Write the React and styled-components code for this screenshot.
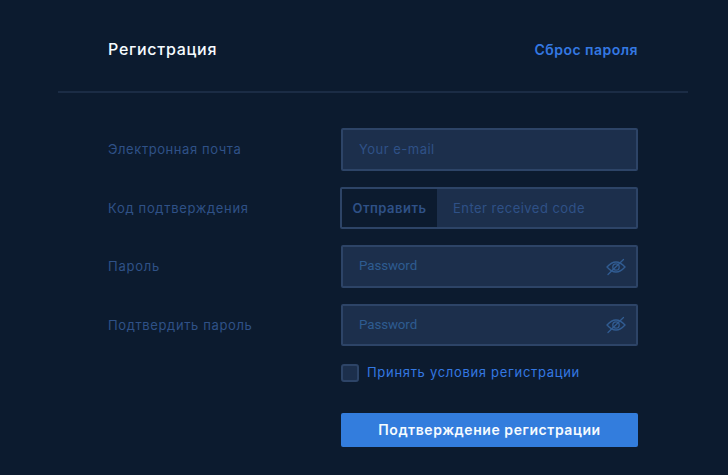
import React from "react";
import styled, { createGlobalStyle } from "styled-components";

const GlobalStyle = createGlobalStyle`
  *, *::before, *::after { box-sizing: border-box; }
  body { margin: 0; background: #0c1b2f; overflow: hidden; }
  button, input { font: inherit; }
`;

const Page = styled.main`
  width: 728px;
  height: 475px;
  padding: 0 40px 0 58px;
  background: #0c1b2f;
  font-family: Inter, "Noto Sans", sans-serif;
  font-size: 13px;
`;

const Header = styled.header`
  display: flex;
  justify-content: space-between;
  height: 93px;
  padding: 0 50px;
  border-bottom: 2px solid #1b2c45;
  white-space: nowrap;
`;

const Title = styled.h1`
  margin: 39px 0 0;
  color: #f6fbff;
  font-size: 16px;
  font-weight: 500;
  line-height: 20px;
  letter-spacing: 0.72px;
`;

const ResetLink = styled.a`
  margin-top: 40px;
  color: #3478e2;
  font-size: 14px;
  font-weight: 600;
  line-height: 20px;
  letter-spacing: 0.48px;
`;

const Form = styled.form`
  display: flex;
  flex-direction: column;
  padding: 35px 50px 0;
`;

const Row = styled.div`
  display: grid;
  grid-template-columns: 233px 297px;
  height: ${({ $height }) => $height}px;
  margin-bottom: ${({ $gap }) => $gap}px;
`;

const Label = styled.label`
  padding-top: 12px;
  color: #2f5187;
  line-height: 18px;
  letter-spacing: ${({ $spacing }) => $spacing}px;
  white-space: nowrap;
`;

const Field = styled.div`
  display: flex;
  align-items: center;
  height: 100%;
  margin-left: ${({ $wide }) => ($wide ? "-1px" : "0")};
  padding-right: ${({ $icon }) => ($icon ? "10px" : "0")};
  border: 2px solid #2d4467;
  border-radius: 2px;
  background: #1c2f4c;
`;

const Input = styled.input`
  flex: 1;
  min-width: 0;
  height: 100%;
  padding: 0 16px 1px;
  border: 0;
  outline: 0;
  background: transparent;
  color: #7c9bd0;
  letter-spacing: ${({ $spacing }) => $spacing}px;
  &::placeholder { color: #2f5187; opacity: 1; }
`;

const PasswordInput = styled(Input)`
  padding-bottom: 2px;
  font-family: Roboto, sans-serif;
  font-size: 13.3333px;
  &::placeholder { color: #2e5c91; }
`;

const SendButton = styled.button`
  width: 95px;
  height: 100%;
  padding: 0;
  border: 0;
  background: #0c1b2f;
  color: #2f5187;
  font-weight: 600;
  letter-spacing: 0.5px;
`;

const EyeIcon = styled.svg`
  flex: none;
  width: 20px;
  height: 18px;
  fill: none;
  stroke: #315c92;
  stroke-width: 1.3;
  stroke-linecap: round;
`;

const Terms = styled.label`
  display: flex;
  align-items: center;
  gap: 8px;
  height: 18px;
  margin: 18px 0 0 233px;
  color: #3478e2;
  letter-spacing: 0.69px;
  white-space: nowrap;
`;

const TermsText = styled.span`
  padding-bottom: 2px;
  line-height: 16px;
`;

const Checkbox = styled.input`
  appearance: none;
  width: 18px;
  height: 18px;
  margin: 0;
  border: 2px solid #2d4467;
  border-radius: 3px;
  background: #1c2f4c;
`;

const Submit = styled.button`
  width: 297px;
  height: 34px;
  margin: 31px 0 0 233px;
  padding: 0 0 1px;
  border: 0;
  border-radius: 2px;
  background: #337ddd;
  color: #f6fbff;
  font-size: 14px;
  font-weight: 600;
  letter-spacing: 0.56px;
  white-space: nowrap;
`;

function HiddenEye() {
  return (
    <EyeIcon viewBox="0 0 20 18" aria-hidden="true">
      <path d="M1 9Q10 -1 19 9Q10 19 1 9Z" />
      <circle cx="10" cy="9" r="3.2" />
      <path d="M2 16.5L17.5 1.5" />
    </EyeIcon>
  );
}

export default function App() {
  return (
    <>
      <GlobalStyle />
      <Page>
        <Header>
          <Title>Регистрация</Title>
          <ResetLink>Сброс пароля</ResetLink>
        </Header>
        <Form>
          <Row $height={43} $gap={16}>
            <Label htmlFor="email" $spacing={0.57}>Электронная почта</Label>
            <Field>
              <Input id="email" placeholder="Your e-mail" $spacing={0.48} />
            </Field>
          </Row>
          <Row $height={42} $gap={16}>
            <Label htmlFor="code" $spacing={0.68}>Код подтверждения</Label>
            <Field $wide>
              <SendButton type="button">Отправить</SendButton>
              <Input id="code" placeholder="Enter received code" $spacing={0.47} />
            </Field>
          </Row>
          <Row $height={43} $gap={16}>
            <Label htmlFor="password" $spacing={0.75}>Пароль</Label>
            <Field $icon>
              <PasswordInput id="password" type="password" placeholder="Password" $spacing={-0.1} />
              <HiddenEye />
            </Field>
          </Row>
          <Row $height={42} $gap={0}>
            <Label htmlFor="confirm" $spacing={0.62}>Подтвердить пароль</Label>
            <Field $icon>
              <PasswordInput id="confirm" type="password" placeholder="Password" $spacing={-0.1} />
              <HiddenEye />
            </Field>
          </Row>
          <Terms>
            <Checkbox type="checkbox" />
            <TermsText>Принять условия регистрации</TermsText>
          </Terms>
          <Submit type="button">Подтверждение регистрации</Submit>
        </Form>
      </Page>
    </>
  );
}
